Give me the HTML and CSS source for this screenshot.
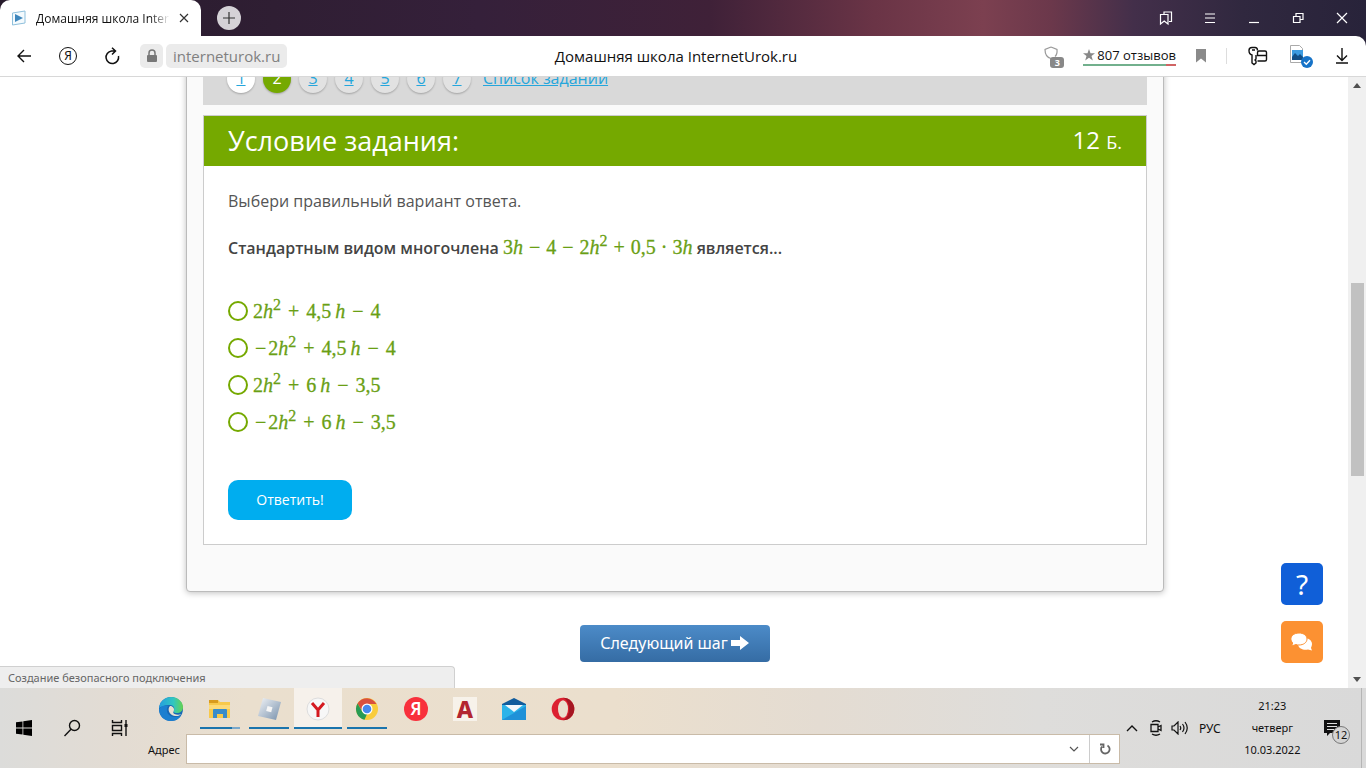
FILE: index.html
```html
<!DOCTYPE html>
<html lang="ru">
<head>
<meta charset="utf-8">
<title>Домашняя школа InternetUrok.ru</title>
<link rel="stylesheet" href="styles.css">
</head>
<body>
<header class="titlebar">
  <div class="tab">
    <svg class="tab-icon" width="16" height="16" viewBox="0 0 16 16"><path d="M1.500 3 14 1v12L1.500 15z" fill="#f4fafd" stroke="#8fc0dc"/><path d="M4 4l8 4-8 4z" fill="#3f87bd"/></svg>
    <span class="tab-title">Домашняя школа InternetUrok.ru</span>
    <button class="tab-close" aria-label="Закрыть вкладку"><svg width="10" height="10" viewBox="0 0 10 10"><path d="M1 1l8 8M9 1L1 9" stroke="#333" stroke-width="1.200"/></svg></button>
  </div>
  <button class="new-tab" aria-label="Новая вкладка"><svg width="12" height="12" viewBox="0 0 12 12"><path d="M6 0v12M0 6h12" stroke="#333" stroke-width="1.200"/></svg></button>
  <div class="window-buttons">
    <button aria-label="Закладки"><svg width="16" height="16" viewBox="0 0 16 16" fill="none" stroke="#fff" stroke-width="1.200"><path d="M6 4V2h7.500v9.500H11"/><path d="M2.500 4.500H10v9.500L6.200 11l-3.700 3z"/></svg></button>
    <button aria-label="Меню"><svg width="12" height="12" viewBox="0 0 12 12" stroke="#fff" stroke-width="1.200"><path d="M1 2h10M1 6h10M1 10.500h10"/></svg></button>
    <button aria-label="Свернуть"><svg width="12" height="12" viewBox="0 0 12 12" stroke="#fff" stroke-width="1.200"><path d="M1 10.500h10"/></svg></button>
    <button aria-label="Развернуть"><svg width="12" height="12" viewBox="0 0 12 12" fill="none" stroke="#fff" stroke-width="1.200"><path d="M4 4V1.500h7v6H8.500M1.500 4.500h6.500v6H1.500z"/></svg></button>
    <button aria-label="Закрыть"><svg width="12" height="12" viewBox="0 0 12 12" stroke="#fff" stroke-width="1.200"><path d="M1 1l10 10M11 1L1 11"/></svg></button>
  </div>
</header>

<div class="toolbar-wrap">
<div class="toolbar">
  <div class="nav">
    <button class="nav-button" aria-label="Назад"><svg width="16" height="16" viewBox="0 0 16 16" fill="none" stroke="#111" stroke-width="1.400"><path d="M15 8H2M8 2L2 8l6 6"/></svg></button>
    <button class="nav-button" aria-label="Яндекс"><span class="ya">Я</span></button>
    <button class="nav-button" aria-label="Обновить"><svg width="18" height="18" viewBox="0 0 18 18" fill="none" stroke="#111" stroke-width="1.500"><path d="M12 4H8.500A6.300 6.300 0 1 0 15.500 9M9 .7L12.500 4 9 7.500"/></svg></button>
    <div class="address">
      <span class="chip lock"><svg width="12" height="14" viewBox="0 0 12 14"><path d="M3 6V4a3 3 0 0 1 6 0v2" fill="none" stroke="#777" stroke-width="1.500"/><rect x="1" y="6" width="10" height="7" rx="1" fill="#777"/></svg></span>
      <span class="chip host">interneturok.ru</span>
    </div>
  </div>
  <div class="page-title">Домашняя школа InternetUrok.ru</div>
  <div class="tools">
    <button class="shield" aria-label="Защита"><svg width="20" height="20" viewBox="0 0 20 20"><path d="M7 1l6 2.500c.3 3-.3 5.500-2 7M7 1L1 3.500C1 8 3 11.500 7 12.500" fill="none" stroke="#999" stroke-width="1.200"/></svg><span class="count">3</span></button>
    <a class="reviews" href="#"><svg width="12" height="12" viewBox="0 0 12 12"><path d="M6 0l1.500 4.200H12L8.500 7l1.300 4.500L6 8.800 2.200 11.500 3.500 7 0 4.200h4.500z" fill="#888"/></svg>807 отзывов</a>
    <button aria-label="В закладки"><svg width="12" height="16" viewBox="0 0 12 16"><path d="M1 1h10v13.500L6 10.500l-5 4z" fill="#8a8a8a"/></svg></button>
    <span class="divider"></span>
    <button aria-label="Пароли"><svg width="20" height="20" viewBox="0 0 20 20" fill="none" stroke="#111" stroke-width="1.400"><path d="M9.500 4.500C9.500 2.500 8.500 1.500 7 1.500H4C1.500 1.500 1 3 1 4.500 1 7 2 8.500 4 9v8l2 1.500L8 17v-2l-1-1 1-1V9M4 4h3"/><path d="M9.500 15H17q1.500 0 1.500-1.500v-7Q18.500 5 17 5h-6Q9.500 5 9.500 7v2.500h9"/></svg></button>
    <button aria-label="Файл"><svg width="24" height="24" viewBox="0 0 24 24"><path d="M1.500 1.500h9l3 3v14h-12z" fill="#fff" stroke="#aaa"/><rect x="3" y="6" width="11" height="10" fill="#3c9be0"/><path d="M3 16v-3l3-4 3 3 2-2 3 3v3z" fill="#134f86"/><circle cx="18" cy="18" r="6" fill="#1673c8"/><path d="M15 18l2.300 2.200 3.700-4" fill="none" stroke="#fff" stroke-width="1.400"/></svg></button>
    <button aria-label="Загрузки"><svg width="14" height="16" viewBox="0 0 14 16" fill="none" stroke="#111" stroke-width="1.400"><path d="M7 0v12M2 7.500l5 5 5-5M1 15h12"/></svg></button>
  </div>
</div>
</div>

<div class="viewport">
  <main class="page">
    <section class="lesson">
      <nav class="steps">
        <a class="step visited" href="#">1</a><a class="step current" href="#">2</a><a class="step" href="#">3</a><a class="step" href="#">4</a><a class="step" href="#">5</a><a class="step" href="#">6</a><a class="step" href="#">7</a>
        <a class="list-link" href="#">Список заданий</a>
      </nav>
      <form class="task">
        <div class="task-head"><h1>Условие задания:</h1><div class="score">12 <small>Б.</small></div></div>
        <div class="task-body">
          <p class="hint">Выбери правильный вариант ответа.</p>
          <p class="question">Стандартным видом многочлена <span class="math">3<i>h</i><b>−</b>4<b>−</b>2<i>h</i><sup>2</sup><b>+</b>0,5<b class="dot">·</b>3<i>h</i></span> является...</p>
          <div class="options">
            <label class="option"><input type="radio" name="answer"><span class="math">2<i>h</i><sup>2</sup><b>+</b>4,5<i class="var">h</i><b>−</b>4</span></label>
            <label class="option"><input type="radio" name="answer"><span class="math"><b class="sign">−</b>2<i>h</i><sup>2</sup><b>+</b>4,5<i class="var">h</i><b>−</b>4</span></label>
            <label class="option"><input type="radio" name="answer"><span class="math">2<i>h</i><sup>2</sup><b>+</b>6<i class="var">h</i><b>−</b>3,5</span></label>
            <label class="option"><input type="radio" name="answer"><span class="math"><b class="sign">−</b>2<i>h</i><sup>2</sup><b>+</b>6<i class="var">h</i><b>−</b>3,5</span></label>
          </div>
          <button class="answer" type="button">Ответить!</button>
        </div>
      </form>
    </section>
    <button class="next">Следующий шаг <svg width="20" height="16" viewBox="0 0 20 16"><path d="M1 5h9V1l9 7-9 7v-4H1z" fill="#fff"/></svg></button>
  </main>
  <div class="scrollbar">
    <span class="arrow up"></span><span class="before"></span><span class="thumb"></span><span class="after"></span><span class="arrow down"></span>
  </div>
  <div class="floating">
    <button class="help" aria-label="Помощь">?</button>
    <button class="chat" aria-label="Чат"><svg width="24" height="20" viewBox="0 0 24 20"><path d="M14 6c4 0 8 2 8 6 0 2-1 3-1 4l1 2.500-4-1c-4 1-9-.5-10-4.500z" fill="#fff"/><path d="M9 1c4.500 0 8 2.500 8 6s-3.500 6-8 6c-1 0-2 0-3-.5L1.500 14l1.200-3C.3 8.500.3 5.500 2.500 3.300 4 1.800 6.500 1 9 1z" fill="#fff" stroke="#fc9132"/></svg></button>
  </div>
  <div class="status">Создание безопасного подключения</div>
</div>

<footer class="taskbar">
  <div class="system">
    <button aria-label="Пуск"><svg width="16" height="16" viewBox="0 0 16 16"><path d="M0 2.300L6.500 1.400v6.200H0zM7.300 1.300L16 0v7.600H7.300zM0 8.400h6.500v6.200L0 13.700zM7.300 8.400H16V16l-8.700-1.300z"/></svg></button>
    <button aria-label="Поиск"><svg width="18" height="18" viewBox="0 0 18 18" fill="none" stroke="#111" stroke-width="1.400"><circle cx="11.500" cy="6.500" r="5"/><path d="M8 10.200L1.500 17"/></svg></button>
    <button aria-label="Представление задач"><svg width="18" height="16" viewBox="0 0 18 16" fill="none" stroke="#111" stroke-width="1.400"><path d="M1.500 0v2.500h9V0M1.500 5.500h9v5h-9zM1.500 16v-2.500h9V16M15 0v16"/><path d="M13.500 5.500h3" stroke-width="3"/></svg></button>
  </div>
  <div class="middle">
    <div class="apps">
      <button class="app" aria-label="Edge"><svg width="24" height="24" viewBox="0 0 24 24"><defs><linearGradient id="edge" x2="1"><stop stop-color="#249ee0"/><stop offset=".6" stop-color="#31c6c0"/><stop offset="1" stop-color="#66d34e"/></linearGradient></defs><circle cx="12" cy="12" r="12" fill="#1768b5"/><path d="M0 11C1 4 6 0 12 0c7 0 12 5 12 10 0 4-3 6-6 6-3 0-4.500-1-3-3 1-3-1-5-5-5-5 0-8 2-10 3z" fill="url(#edge)"/><path d="M9 9c-3 5 0 11 7 11 3 0 5-1 6-2-1 3-5 6-10 6C5 24 0 19 0 12 3 8 6 8 9 9z" fill="#1c7fd0"/><path d="M11 9c-3 3-1 9 5 10 3 .3 5-.7 6.500-2-2 1-5 1-7 0-2-1-1-2-.5-4 .3-2-1.500-4-4-4z" fill="#e9dfd0"/></svg></button>
      <button class="app running split" aria-label="Проводник"><svg width="24" height="24" viewBox="0 0 24 24"><path d="M1 3h9l2 2h10v16H1z" fill="#f8c94b"/><path d="M1 3h9v3H1z" fill="#d99b1d"/><path d="M1 8h21v4H1z" fill="#fdda77"/><path d="M5 21v-8q0-1 1-1h12q1 0 1 1v8h-4v-4H9v4z" fill="#398cca"/></svg></button>
      <button class="app running" aria-label="Roblox"><svg width="24" height="24" viewBox="0 0 24 24"><defs><linearGradient id="rb" x2="1" y2="1"><stop stop-color="#f2f4f7"/><stop offset="1" stop-color="#7891ac"/></linearGradient></defs><path d="M6 1l18 4-5 18L1 19z" fill="url(#rb)"/><path d="M10.500 9l5 1.200-1.300 5-5-1.200z" fill="#f6f6f6"/></svg></button>
      <button class="app running active" aria-label="Яндекс Браузер"><svg width="24" height="24" viewBox="0 0 24 24"><circle cx="12" cy="12" r="11" fill="#f7f7f7" stroke="#ddd"/><path d="M6 6l6 7 6-7M12 12v8" fill="none" stroke="#d41920" stroke-width="3"/></svg></button>
      <button class="app running" aria-label="Chrome"><svg width="24" height="24" viewBox="0 0 24 24"><circle cx="12" cy="12" r="11" fill="#f9cc3b"/><path d="M2.500 6.500A11 11 0 0 1 21.500 7H12l-5 7z" fill="#d9503f"/><path d="M2.500 6.500L7.500 15l4.500 2-2.500 5.800A11 11 0 0 1 2.500 6.500z" fill="#279b54"/><circle cx="12" cy="12" r="5.500" fill="#fff"/><circle cx="12" cy="12" r="4.300" fill="#4688ee"/></svg></button>
      <button class="app" aria-label="Яндекс"><span class="ya-red">Я</span></button>
      <button class="app" aria-label="AutoCAD"><span class="cad">A</span></button>
      <button class="app" aria-label="Почта"><svg width="24" height="24" viewBox="0 0 24 24"><path d="M0 7l12-6 12 6v4H0z" fill="#115c9d"/><path d="M0 8h24v15H0z" fill="#2cb3e9"/><path d="M0 23L24 9v14z" fill="#1f91d8"/><path d="M3 8h18l-9 7z" fill="#f4f8fb"/></svg></button>
      <button class="app" aria-label="Opera"><svg width="24" height="24" viewBox="0 0 24 24"><circle cx="12" cy="12" r="11.300" fill="#dc2030"/><path d="M12 .7a11.300 11.300 0 0 1 0 22.600c4-2 6-6 6-11.300S16 2.700 12 .7z" fill="#a51622"/><ellipse cx="12" cy="12" rx="5" ry="8.700" fill="#eadfce"/></svg></button>
    </div>
    <div class="address-panel">
      <label for="address">Адрес</label>
      <div class="address-box"><input id="address" type="text"><button aria-label="Список"><svg width="10" height="6" viewBox="0 0 10 6"><path d="M1 1l4 4 4-4" fill="none" stroke="#555" stroke-width="1.200"/></svg></button><button class="go" aria-label="Перейти"><svg width="12" height="12" viewBox="0 0 12 12" fill="none" stroke="#666" stroke-width="1.800"><path d="M8.500 2.500A4.300 4.300 0 1 1 3 3.500M1 1.500h3.500V5"/></svg></button></div>
    </div>
  </div>
  <div class="tray">
    <button aria-label="Скрытые значки"><svg width="12" height="8" viewBox="0 0 12 8"><path d="M1 7l5-5 5 5" fill="none" stroke="#111" stroke-width="1.400"/></svg></button>
    <button aria-label="Камера"><svg width="12" height="18" viewBox="0 0 12 18" fill="none" stroke="#111" stroke-width="1.300"><path d="M2 3q4-2.500 8 0M2 15q4 2.500 8 0M1 5.500h7v7H1zM8 8l3-1.500v5L8 10"/></svg></button>
    <button aria-label="Звук"><svg width="18" height="14" viewBox="0 0 18 14" fill="none" stroke="#111" stroke-width="1.200"><path d="M1 5h2l4-4v12L3 9H1zM9 5q1.500 2 0 4M11.500 3q3 4 0 8M14 1q4.500 6 0 12"/></svg></button>
    <span class="lang">РУС</span>
    <div class="clock"><span>21:23</span><span>четверг</span><span>10.03.2022</span></div>
    <button class="notes" aria-label="Уведомления"><svg width="16" height="16" viewBox="0 0 16 16"><path d="M0 0h16v13H6l-3 3v-3H0z" fill="#111"/><path d="M3 3.500h10M3 6.500h10M3 9.500h7" stroke="#ddd" stroke-width="1.200"/></svg><span class="badge">12</span></button>
    <button class="show-desktop" aria-label="Показать рабочий стол"></button>
  </div>
</footer>
</body>
</html>
```
FILE: styles.css
```css
* { box-sizing: border-box; }
body {
  margin: 0;
  height: 100vh;
  overflow: hidden;
  display: flex;
  flex-direction: column;
  background: #fff;
  color: #111;
  font-family: "Noto Sans", "Open Sans", sans-serif;
}
button { border: 0; padding: 0; background: none; font: inherit; color: inherit; display: flex; align-items: center; justify-content: center; }
svg { flex: none; }

.titlebar {
  flex: none;
  display: flex;
  align-items: center;
  height: 36px;
  padding-right: 2px;
  background: linear-gradient(90deg, #271b2c 0, #2f1e33 20%, #35203a 35%, #3f2138 52%, #6a3446 64%, #7c4050 72%, #6b384b 77%, #432f4a 83%, #30283f 91%, #28233a 100%);
}
.tab { align-self: stretch; flex: 0 0 201px; min-width: 0; display: flex; align-items: center; gap: 9px; padding: 0 12px 0 11px; background: #fff; border-radius: 10px 10px 0 0; }
.tab-title { flex: 1; min-width: 0; overflow: hidden; white-space: nowrap; font-family: "Open Sans", sans-serif; font-size: 12px; mask-image: linear-gradient(90deg, #000 85%, transparent); }
.new-tab { width: 24px; height: 24px; margin-left: 16px; border-radius: 50%; background: #d5d2d7; }
.window-buttons { margin-left: auto; display: flex; }
.window-buttons button { width: 44px; height: 36px; }

.toolbar-wrap { flex: none; background: #28233a; }
.toolbar {
  display: grid;
  grid-template-columns: 1fr auto 1fr;
  align-items: center;
  height: 41px;
  padding-right: 14px;
  background: #fff;
  border-bottom: 1px solid #d8d8d8;
  border-radius: 0 10px 0 0;
}
.nav { display: flex; align-items: center; gap: 4px; margin-left: 4px; }
.nav-button { width: 40px; height: 32px; }
.ya { width: 18px; height: 18px; border: 1px solid #111; border-radius: 50%; font-size: 12px; line-height: 16px; }
.address { display: flex; gap: 3px; margin-left: 4px; }
.chip { display: flex; align-items: center; justify-content: center; height: 24px; border-radius: 5px; background: #ebebeb; }
.lock { width: 23px; }
.host { padding: 0 7px; font-family: "Open Sans", sans-serif; font-size: 15px; color: #808080; }
.page-title { font-family: "Open Sans", sans-serif; font-size: 15px; white-space: nowrap; }
.tools { display: flex; align-items: center; justify-content: flex-end; gap: 19px; }
.tools button { min-width: 12px; height: 24px; }
.tools button:nth-last-child(-n+3) { width: 24px; }
.tools button:last-child { width: 20px; }
.shield { position: relative; }
.count { position: absolute; right: 0; bottom: 0; width: 14px; height: 11px; border-radius: 3px; background: #888; color: #fff; font-size: 9px; line-height: 11px; font-weight: 700; }
.reviews { display: flex; align-items: center; gap: 2px; color: #111; text-decoration: none; font-family: "Open Sans", sans-serif; font-size: 13px; line-height: 17px; white-space: nowrap; border-bottom: 2px solid; border-image: linear-gradient(90deg, #72b08d 88%, #d06464 88%) 1; }
.divider { width: 1px; height: 16px; background: #ddd; }

.viewport { position: relative; flex: 1; min-height: 0; display: flex; overflow: hidden; }
.page { flex: 1; display: flex; flex-direction: column; align-items: center; overflow: hidden; padding-left: 2px; font-family: "Open Sans", "Noto Sans", sans-serif; }
.lesson {
  width: 100%;
  max-width: 978px;
  margin-top: -25px;
  padding: 0 16px 46px;
  background: #fafafa;
  border: 1px solid #bbb;
  border-radius: 4px;
  box-shadow: 0 1px 6px rgba(0, 0, 0, .25);
}
.steps { display: flex; align-items: center; gap: 8px; height: 52px; padding-left: 24px; margin-bottom: 10px; background: #d9d9d9; }
.step { width: 28px; height: 28px; border-radius: 50%; background: #e2e2e2; color: #25a6dc; font-size: 16px; line-height: 26px; text-align: center; box-shadow: 0 1px 2px rgba(0, 0, 0, .25); }
.visited { background: #fff; }
.current { background: #75a900; color: #fff; text-decoration: none; }
.list-link { margin-left: 4px; font-size: 16px; line-height: 22px; padding-bottom: 2px; color: #25a6dc; }
.task { background: #fff; border: 1px solid #ccc; }
.task-head { display: flex; align-items: center; justify-content: space-between; height: 50px; padding: 0 24px; background: #75a900; color: #fff; }
h1 { margin: 0; font-size: 27px; font-weight: 400; line-height: 36px; }
.score { font-size: 24px; line-height: 28px; }
.score small { font-size: 18px; }
.task-body { padding: 23px 24px 24px; color: #444; font-size: 16px; }
p { margin: 0; line-height: 24px; }
.hint { color: #555; }
.question { margin-top: 22px; font-weight: 600; }
.math { font-family: "Liberation Serif", serif; font-size: 20px; font-weight: 400; line-height: 24px; color: #6a9f14; white-space: nowrap; -webkit-text-stroke: 0.3px #6a9f14; }
.math b { font-weight: 400; margin: 0 7px; }
.question .math b { margin: 0 6px; }
.question .math .dot { margin: 0 5px; }
.math b.sign { margin: 0 2px; }
.math sup { font-size: 16px; line-height: 0; vertical-align: 8px; }
.math .var { margin-left: 4px; }
.options { display: flex; flex-direction: column; margin-top: 32px; }
.option { display: flex; align-items: center; gap: 5px; height: 37px; }
.option input { appearance: none; width: 20px; height: 20px; margin: 0; border: 2px solid #75a900; border-radius: 50%; background: #fff; }
.answer { width: 124px; height: 40px; margin-top: 40px; border-radius: 10px; background: #00adef; color: #fff; font-size: 14px; line-height: 20px; }
.next { height: 37px; margin-top: 33px; padding: 0 20px 2px; gap: 2px; border-radius: 4px; background: linear-gradient(#4c8bc8, #356ca4); color: #fff; font-family: "Noto Sans", sans-serif; font-size: 16px; }

.scrollbar { flex: 0 0 18px; display: flex; flex-direction: column; align-items: center; background: #f0f0f0; }
.arrow { height: 17px; display: flex; align-items: center; }
.arrow::before { content: ""; border: 4px solid transparent; }
.up::before { border-top: 0; border-bottom: 5px solid #505050; }
.down::before { border-bottom: 0; border-top: 5px solid #505050; }
.before { flex: 189; }
.thumb { flex: 194; width: 13px; background: #c1c1c1; }
.after { flex: 195; }
.floating { position: absolute; right: 43px; bottom: 25px; display: flex; flex-direction: column; gap: 16px; }
.floating button { width: 42px; height: 42px; border-radius: 5px; color: #fff; }
.help { background: #105fd8; font-size: 28px; }
.chat { background: #fc9132; }
.status { position: absolute; left: 0; bottom: 0; width: 455px; height: 22px; padding-left: 8px; border: 1px solid #d0d0d0; border-width: 1px 1px 0 0; border-top-right-radius: 4px; background: #eee; color: #666; font-size: 11px; line-height: 22px; }

.taskbar { flex: none; display: flex; height: 80px; background: linear-gradient(90deg, #dcdcda 0, #e3dcd3 9%, #eadfce 18%, #ebdfcd 45%, #e4dcd2 60%, #dedddb 76%, #d9d9d9 100%); }
.system { display: flex; align-items: center; }
.system button { width: 48px; height: 80px; }
.middle { flex: 1; display: flex; flex-direction: column; }
.apps { display: flex; gap: 1px; padding-left: 3px; height: 41px; }
.app { width: 48px; height: 41px; background: linear-gradient(#1a74ad, #1a74ad) no-repeat center bottom / 0 2px; }
.running { background-size: 40px 2px; }
.split { background-image: linear-gradient(90deg, #1a74ad 80%, #7aa8cb 80%); }
.active { background-color: #f6f1eb; background-size: 48px 2px; }
.ya-red { width: 24px; height: 24px; border-radius: 50%; background: #f8303b; color: #fff; font-size: 17px; line-height: 24px; font-weight: 600; }
.cad { width: 24px; height: 24px; background: #f7f2ea; color: #b32630; font-size: 23px; line-height: 24px; font-weight: 800; }
.address-panel { display: flex; align-items: center; gap: 6px; margin: 5px 0 0 4px; font-size: 11px; }
.address-box { flex: 1; display: flex; height: 30px; background: #fff; border: 1px solid #c9bba8; }
.address-box input { flex: 1; min-width: 0; border: 0; background: none; outline: 0; }
.address-box button { width: 30px; }
.address-box .go { border-left: 1px solid #ccc; }
.tray { flex: 0 0 246px; display: flex; align-items: center; font-size: 11px; }
.tray button { width: 24px; height: 32px; }
.lang { margin-left: 7px; font-size: 12px; }
.clock { flex: 1; display: flex; flex-direction: column; align-items: center; line-height: 22px; }
.tray .notes { position: relative; width: 26px; justify-content: flex-start; }
.tray .show-desktop { width: 5px; height: 80px; margin-left: 11px; border-left: 1px solid #b5b5b5; }
.badge { position: absolute; right: 0; bottom: 0; width: 18px; height: 18px; border: 1px solid #777; border-radius: 50%; background: #d4d4d4; font-size: 11px; line-height: 16px; text-align: center; }
```
